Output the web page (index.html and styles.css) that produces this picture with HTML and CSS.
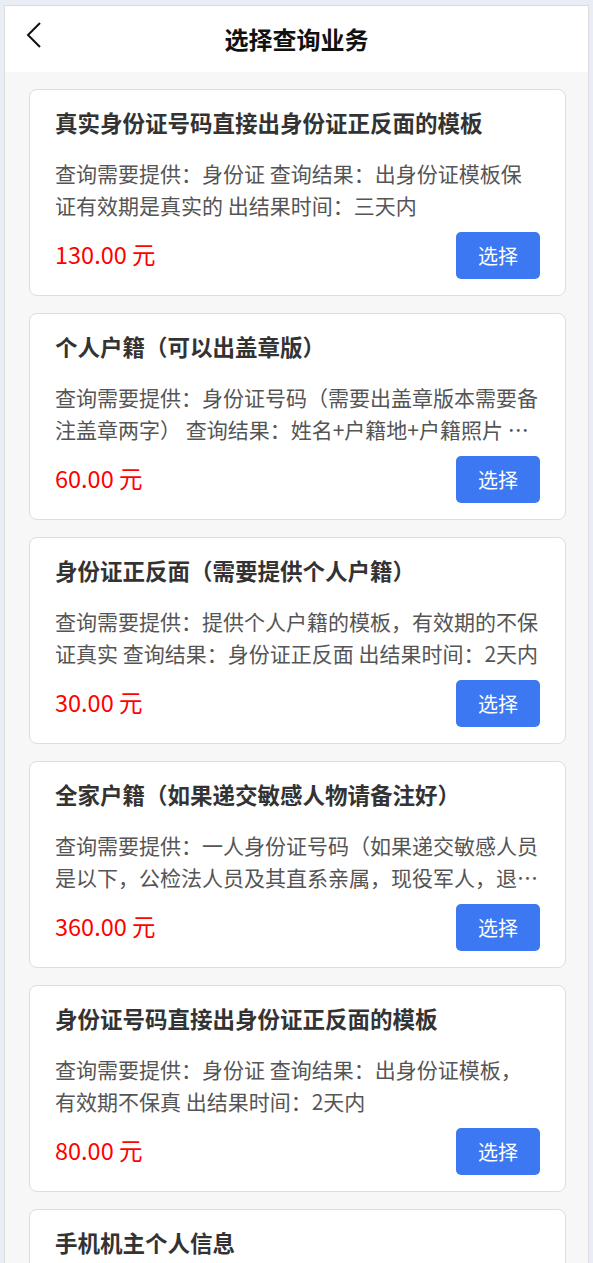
FILE: index.html
```html
<!DOCTYPE html>
<html lang="zh-CN">
<head>
  <meta charset="UTF-8">
  <meta name="viewport" content="width=device-width, initial-scale=1.0">
  <title>选择查询业务</title>
  <link rel="stylesheet" href="styles.css">
</head>
<body>
  <div class="page">
    <div class="header">
      <a class="back" href="#">
        <svg width="16" height="26" viewBox="0 0 16 26">
          <polyline points="14,1 2,13 14,25" fill="none" stroke="#111" stroke-width="2"/>
        </svg>
      </a>
      <h1 class="title">选择查询业务</h1>
      <span></span>
    </div>

    <div class="list">
      <div class="card">
        <h3 class="card-title">真实身份证号码直接出身份证正反面的模板</h3>
        <p class="card-desc">查询需要提供：身份证 查询结果：出身份证模板保证有效期是真实的 出结果时间：三天内</p>
        <div class="card-foot">
          <span class="price">130.00 元</span>
          <button class="btne">选择</button>
        </div>
      </div>

      <div class="card">
        <h3 class="card-title">个人户籍（可以出盖章版）</h3>
        <p class="card-desc">查询需要提供：身份证号码（需要出盖章版本需要备注盖章两字） 查询结果：姓名+户籍地+户籍照片 身份证号码 出结果时间：1天内</p>
        <div class="card-foot">
          <span class="price">60.00 元</span>
          <button class="btne">选择</button>
        </div>
      </div>

      <div class="card">
        <h3 class="card-title">身份证正反面（需要提供个人户籍）</h3>
        <p class="card-desc">查询需要提供：提供个人户籍的模板，有效期的不保证真实 查询结果：身份证正反面 出结果时间：2天内</p>
        <div class="card-foot">
          <span class="price">30.00 元</span>
          <button class="btne">选择</button>
        </div>
      </div>

      <div class="card">
        <h3 class="card-title">全家户籍（如果递交敏感人物请备注好）</h3>
        <p class="card-desc">查询需要提供：一人身份证号码（如果递交敏感人员是以下，公检法人员及其直系亲属，现役军人，退役军人请备注） 查询结果：全家户籍信息</p>
        <div class="card-foot">
          <span class="price">360.00 元</span>
          <button class="btne">选择</button>
        </div>
      </div>

      <div class="card">
        <h3 class="card-title">身份证号码直接出身份证正反面的模板</h3>
        <p class="card-desc">查询需要提供：身份证 查询结果：出身份证模板，有效期不保真 出结果时间：2天内</p>
        <div class="card-foot">
          <span class="price">80.00 元</span>
          <button class="btne">选择</button>
        </div>
      </div>

      <div class="card">
        <h3 class="card-title">手机机主个人信息</h3>
        <p class="card-desc">查询需要提供：手机号码 查询结果：姓名+身份证号码 出结果时间：1天内</p>
        <div class="card-foot">
          <span class="price">50.00 元</span>
          <button class="btne">选择</button>
        </div>
      </div>
    </div>
  </div>
</body>
</html>
```

FILE: styles.css
```css
body {
  font-family: "Noto Sans CJK SC", "Noto Sans", sans-serif;
  margin: 0;
  padding: 5px 4px 0;
  background-color: #e9edf5;
}

.page {
  border: 1px solid #dcdcdc;
  border-bottom: none;
  background-color: #f7f7f7;
  min-height: 1300px;
}

.header {
  display: grid;
  grid-template-columns: 1fr auto 1fr;
  height: 66px;
  background-color: #ffffff;
}

.back {
  align-self: start;
  margin: 16px 0 0 21px;
  display: block;
  width: 16px;
  height: 26px;
}

.title {
  margin: 0;
  padding-top: 1px;
  line-height: 64px;
  font-size: 24px;
  font-weight: bold;
  color: #111;
}

.list {
  padding: 17px 22px 0 24px;
}

.card {
  background-color: #ffffff;
  border: 1px solid #dddddd;
  border-radius: 8px;
  padding: 17px 25px 16px 25px;
  margin-bottom: 17px;
}

.card-title {
  margin: 0;
  font-size: 22.5px;
  line-height: 30px;
  font-weight: bold;
  color: #333;
}

.card-desc {
  margin: 20px 0 0;
  font-size: 21px;
  line-height: 32px;
  color: #555;
  display: -webkit-box;
  -webkit-line-clamp: 2;
  -webkit-box-orient: vertical;
  overflow: hidden;
}

.card-foot {
  display: flex;
  justify-content: space-between;
  align-items: center;
  margin-top: 11px;
}

.price {
  font-size: 23.5px;
  line-height: 30px;
  padding-bottom: 3px;
  color: #ff0000;
}

.btne {
  width: 84px;
  height: 47px;
  border: none;
  border-radius: 5px;
  background-color: #3b78f2;
  color: white;
  font-family: inherit;
  font-size: 20px;
  cursor: pointer;
}
```
